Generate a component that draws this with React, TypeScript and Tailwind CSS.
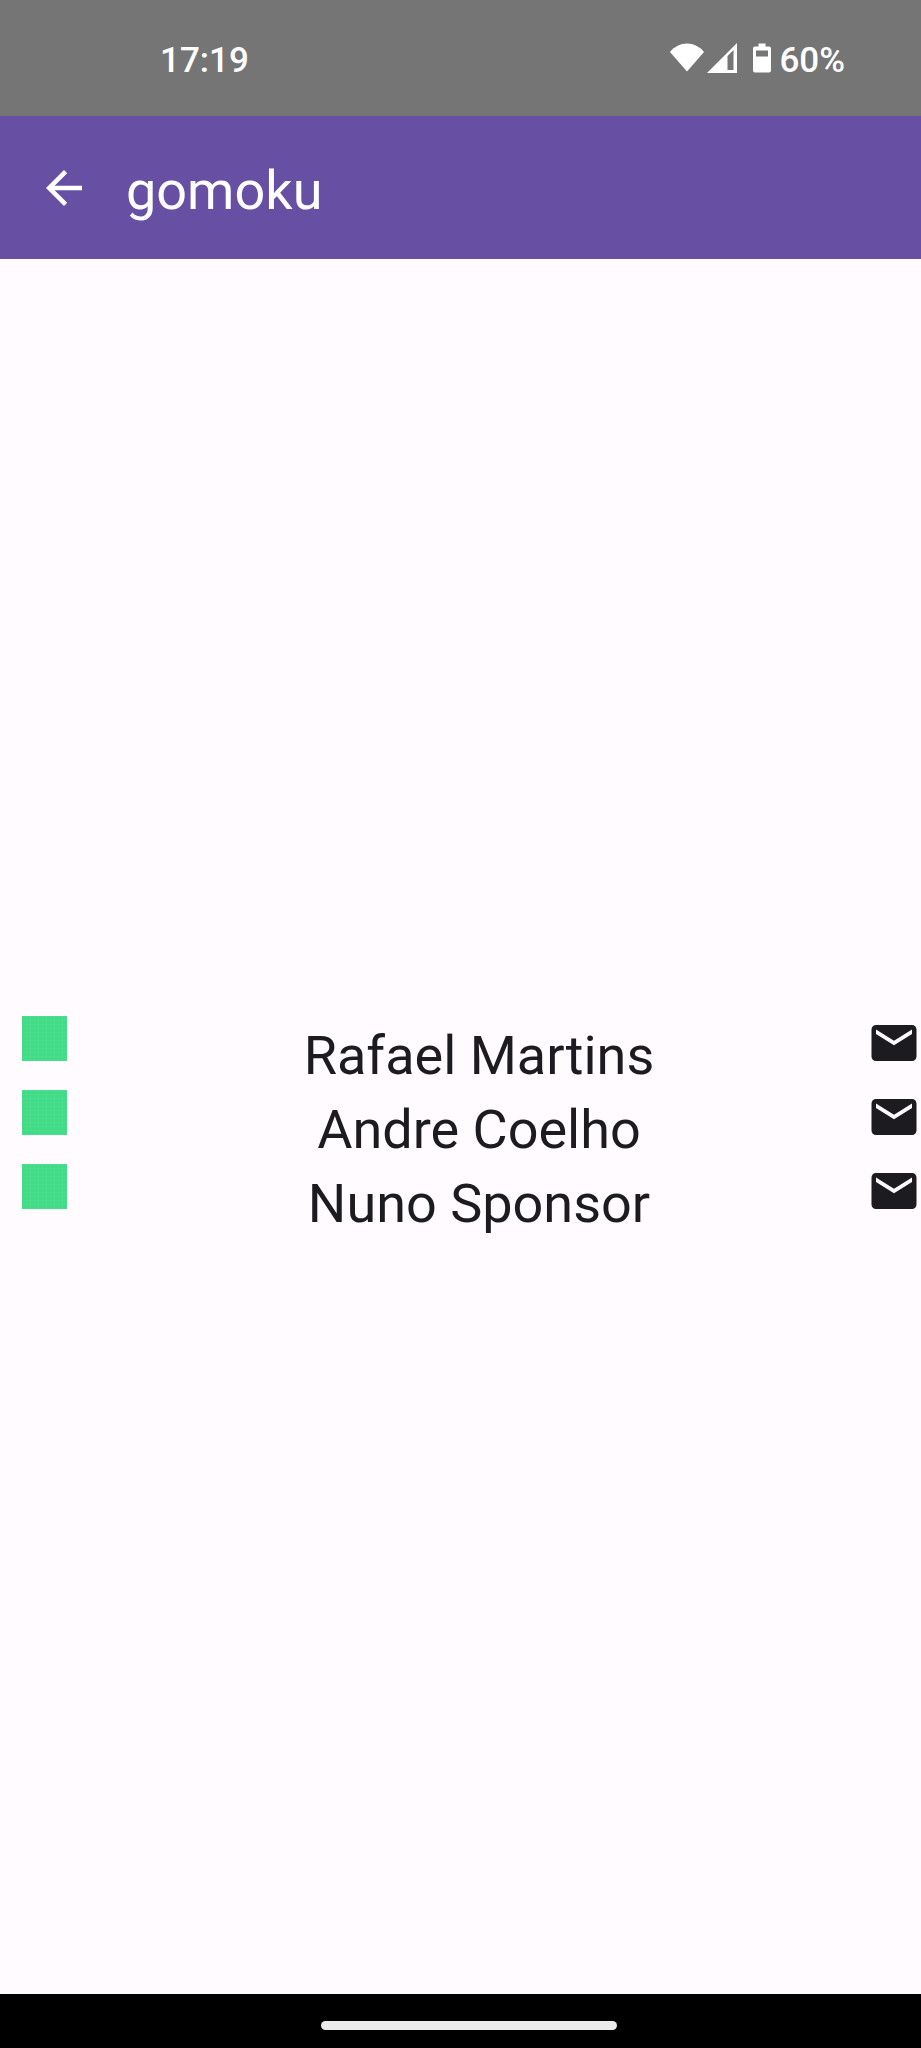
const authors = ['Rafael Martins', 'Andre Coelho', 'Nuno Sponsor'];

function StatusBar() {
  return (
    <div className="flex h-[116px] shrink-0 items-center justify-between bg-[#757575] pr-[76px] pl-[160px] text-[35px] leading-[40px] font-medium text-white">
      <time className="pt-1.5">17:19</time>
      <div className="flex items-center">
        <svg className="h-[30px] w-[34px]" viewBox="0 0 34 30" fill="currentColor" aria-hidden="true">
          <path d="M17 28.500L0 9C4.500 3.500 10.500 0.500 17 0.500S29.500 3.500 34 9Z" />
        </svg>
        <svg className="ml-[3px] h-[30px] w-[30px]" viewBox="0 0 30 30" fill="currentColor" aria-hidden="true">
          <path fillRule="evenodd" d="M30 0V30H0ZM20.500 13V27H26.500V7Z" />
        </svg>
        <svg className="ml-4 h-[30px] w-[18px]" viewBox="0 0 18 30" fill="currentColor" aria-hidden="true">
          <path
            fillRule="evenodd"
            d="M5.500 0.500H12.500V3.500H16Q18 3.500 18 5.500V27.500Q18 29.500 16 29.500H2Q0 29.500 0 27.500V5.500Q0 3.500 2 3.500H5.500ZM3 7.500V13.500H15V7.500Z"
          />
        </svg>
        <span className="ml-2 pt-1.5">60%</span>
      </div>
    </div>
  );
}

function AppBar() {
  return (
    <header className="flex h-[143px] shrink-0 items-center bg-[#674fa3] pl-[37px] text-white">
      <button type="button" aria-label="Back">
        <svg className="size-[54px]" viewBox="0 0 24 24" fill="currentColor" aria-hidden="true">
          <path d="M20 11H7.830l5.590-5.590L12 4l-8 8 8 8 1.410-1.410L7.830 13H20v-2z" />
        </svg>
      </button>
      <h1 className="ml-[35px] pt-1.5 text-[54px] leading-[64px]">gomoku</h1>
    </header>
  );
}

function AuthorRow({ name }: { name: string }) {
  return (
    <li className="flex h-[74px] items-start">
      <span className="mr-6 ml-[22px] size-[45px] shrink-0 bg-[#40dc85] bg-[linear-gradient(to_right,#48de8c_1px,transparent_1px),linear-gradient(to_bottom,#48de8c_1px,transparent_1px)] bg-size-[4px_4px]" />
      <span className="mt-2 flex-1 text-center text-[54px] leading-[64px] text-[#1c1b1f]">{name}</span>
      <button type="button" aria-label={`Email ${name}`} className="text-[#1c1b1f]">
        <svg className="size-[54px]" viewBox="0 0 24 24" fill="currentColor" aria-hidden="true">
          <path d="M20 4H4c-1.100 0-1.990.9-1.990 2L2 18c0 1.100.9 2 2 2h16c1.100 0 2-.9 2-2V6c0-1.100-.9-2-2-2zm0 4l-8 5-8-5V6l8 5 8-5v2z" />
        </svg>
      </button>
    </li>
  );
}

export default function App() {
  return (
    <div className="flex min-h-screen flex-col bg-[#fffbff] font-[Roboto,sans-serif]">
      <StatusBar />
      <AppBar />
      <main className="flex flex-1 flex-col justify-center">
        <ul>
          {authors.map((name) => (
            <AuthorRow key={name} name={name} />
          ))}
        </ul>
      </main>
      <footer className="flex h-[54px] shrink-0 items-center justify-center bg-black pt-2 pl-4">
        <div className="h-[9px] w-[296px] rounded-full bg-[#ebebeb]" />
      </footer>
    </div>
  );
}
